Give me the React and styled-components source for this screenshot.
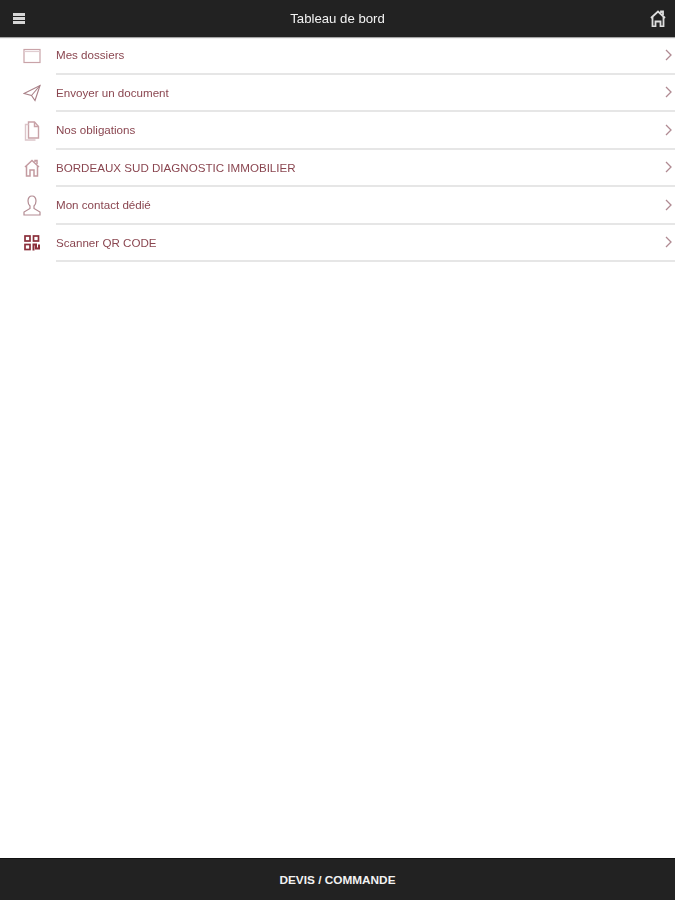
import styled, { createGlobalStyle } from "styled-components";

const menu = [
  { label: "Mes dossiers", icon: "folder" },
  { label: "Envoyer un document", icon: "send" },
  { label: "Nos obligations", icon: "docs" },
  { label: "BORDEAUX SUD DIAGNOSTIC IMMOBILIER", icon: "house" },
  { label: "Mon contact dédié", icon: "user" },
  { label: "Scanner QR CODE", icon: "qr" },
];

function RowIcon({ name }) {
  if (name === "folder") {
    return (
      <svg width="18" height="16" viewBox="0 0 18 16" fill="none" stroke="#c9a3a8" strokeWidth="1.200">
        <rect x="1" y="1.500" width="16" height="13" />
        <path d="M1 3.500h16" stroke="#e0cdd0" />
      </svg>
    );
  }
  if (name === "send") {
    return (
      <svg width="18" height="18" viewBox="0 0 18 18" fill="none" stroke="#a87f86" strokeWidth="1.100">
        <path d="M1 9.500 17 1.500 12 16.500 8.500 11.500Z" />
        <path d="M8.500 11.500 17 1.500" />
      </svg>
    );
  }
  if (name === "docs") {
    return (
      <svg width="16" height="20" viewBox="0 0 16 20" fill="none" stroke="#c9a3a8" strokeWidth="1.400">
        <path d="M4.500 1h6l4 4.500V17h-10Z" />
        <path d="M10.500 1v4.500h4" />
        <path d="M4.500 3.500H1.500V19h10" stroke="#dcc5c9" />
      </svg>
    );
  }
  if (name === "house") {
    return (
      <svg width="16" height="18" viewBox="0 0 16 18" fill="none" stroke="#c39aa0" strokeWidth="1.500">
        <path d="M1 8 8 1.500 15 8" />
        <path d="M2.500 7v10h3.500v-6h4v6h3.500V7" />
        <path d="M11 3V1.500h2V5" />
      </svg>
    );
  }
  if (name === "user") {
    return (
      <svg width="18" height="21" viewBox="0 0 18 21" fill="none" stroke="#b38c93" strokeWidth="1.200">
        <path d="M9 1C6.500 1 5 3 5 6c0 2.500 1 4 2 5v2.500L1 17v3h16v-3l-6-3.500V11c1-1 2-2.500 2-5 0-3-1.500-5-4-5Z" />
      </svg>
    );
  }
  return (
    <svg width="16" height="16" viewBox="0 0 16 16" fill="none" stroke="#8a2f3a" strokeWidth="1.700">
      <rect x="1" y="1" width="5" height="5" />
      <rect x="9.500" y="1" width="5" height="5" />
      <rect x="1" y="9.500" width="5" height="5" />
      <path d="M9.500 15.500v-6h2.500v4h3v-4" strokeWidth="2" />
    </svg>
  );
}

export default function App() {
  return (
    <>
      <GlobalStyle />
      <Screen>
        <TopBar>
          <Burger>
            <span />
            <span />
            <span />
          </Burger>
          <Title>Tableau de bord</Title>
          <svg width="16" height="17" viewBox="0 0 16 17" fill="none" stroke="#dedede" strokeWidth="1.800">
            <path d="M1 8 8 1.500 15 8" />
            <path d="M2.500 7v9.500h3v-5h5v5h3V7" />
            <path d="M11 3V1.500h2V5" />
          </svg>
        </TopBar>
        <Menu>
          {menu.map((item) => (
            <Row key={item.label}>
              <IconSlot>
                <RowIcon name={item.icon} />
              </IconSlot>
              <RowBody>
                <Label>{item.label}</Label>
                <svg width="7" height="12" viewBox="0 0 7 12" fill="none" stroke="#b08a92" strokeWidth="1.300">
                  <path d="M1 1 6 6 1 11" />
                </svg>
              </RowBody>
            </Row>
          ))}
        </Menu>
        <BottomBar>DEVIS / COMMANDE</BottomBar>
      </Screen>
    </>
  );
}

const GlobalStyle = createGlobalStyle`
  html, body {
    margin: 0;
    padding: 0;
    background: #fff;
  }
`;

const Screen = styled.div`
  width: 675px;
  height: 900px;
  display: flex;
  flex-direction: column;
  font-family: "Liberation Sans", Arial, sans-serif;
  overflow: hidden;
  filter: blur(0.55px);
`;

const TopBar = styled.div`
  height: 37px;
  flex-shrink: 0;
  display: flex;
  align-items: center;
  justify-content: space-between;
  padding: 0 9px 0 13px;
  background-color: #222222;
  box-shadow: 0 1px 1px rgba(0, 0, 0, 0.35);
  color: #f2f2f2;
`;

const Burger = styled.div`
  width: 12px;
  height: 11px;
  display: flex;
  flex-direction: column;
  justify-content: space-between;

  span {
    height: 3px;
    background-color: #d6d6d6;
  }
`;

const Title = styled.div`
  font-size: 13.200px;
`;

const Menu = styled.div`
  flex: 1;
  display: flex;
  flex-direction: column;
`;

const Row = styled.div`
  height: 37.500px;
  display: flex;
  align-items: stretch;
`;

const IconSlot = styled.div`
  width: 56px;
  flex-shrink: 0;
  display: flex;
  align-items: center;
  justify-content: center;
  padding-left: 8px;
  box-sizing: border-box;
`;

const RowBody = styled.div`
  flex: 1;
  display: flex;
  align-items: center;
  justify-content: space-between;
  padding: 0 3px 0 0;
  border-bottom: 2px solid #e6e6e6;
  box-sizing: border-box;
`;

const Label = styled.span`
  font-size: 11.600px;
  color: #8a4650;
`;

const BottomBar = styled.div`
  height: 42px;
  flex-shrink: 0;
  display: flex;
  align-items: center;
  justify-content: center;
  box-sizing: border-box;
  background-color: #222222;
  border-top: 1px solid #111;
  color: #f2f2f2;
  font-size: 11.800px;
  font-weight: bold;
`;
